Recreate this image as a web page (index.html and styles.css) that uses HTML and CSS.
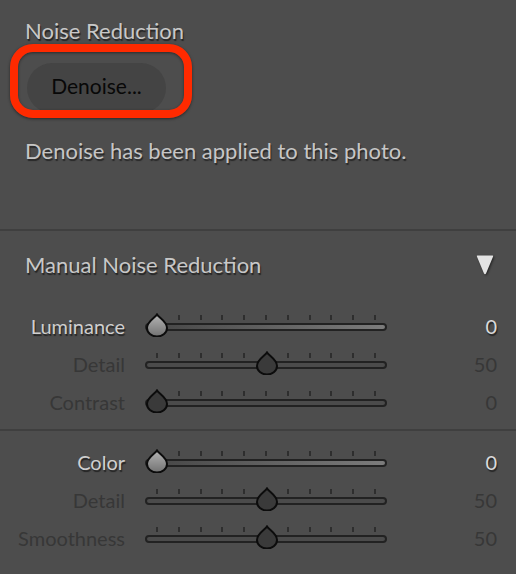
FILE: index.html
```html
<!DOCTYPE html>
<html>
<head>
<meta charset="utf-8">
<link rel="stylesheet" href="styles.css">
</head>
<body>
<svg class="defs" width="0" height="0">
  <defs>
    <linearGradient id="thumbOn" x1="0" y1="0" x2="0" y2="1">
      <stop offset="0" stop-color="#b4b4b4"/>
      <stop offset="1" stop-color="#727272"/>
    </linearGradient>
  </defs>
</svg>
<div class="panel">
  <section class="sec-denoise">
    <div class="title">Noise Reduction</div>
    <div class="btn-wrap">
      <div class="pill">Denoise...</div>
      <div class="highlight"></div>
    </div>
    <div class="desc">Denoise has been applied to this photo.</div>
  </section>

  <div class="manual-head">
    <div class="title">Manual Noise Reduction</div>
    <svg class="tri" width="20" height="24" viewBox="0 0 20 24"><path d="M2.5 2.5 L17.5 2.5 Q18.6 2.6 18 3.8 L11 20.5 Q10 22 9 20.5 L2 3.8 Q1.4 2.6 2.5 2.5 Z" fill="#e4e4e4"/></svg>
  </div>

  <div class="group">
    <div class="row on">
      <div class="label">Luminance</div>
      <div class="slider">
        <div class="ticks"></div>
        <div class="track"></div>
        <svg class="thumb" style="left:0px" width="24" height="24" viewBox="0 0 24 24"><path d="M12 1.5 C13.8 4.8 22 8.5 22 15 A10 8.5 0 0 1 2 15 C2 8.5 10.2 4.8 12 1.5 Z"/></svg>
      </div>
      <div class="value">0</div>
    </div>
    <div class="row off">
      <div class="label">Detail</div>
      <div class="slider">
        <div class="ticks"></div>
        <div class="track"></div>
        <svg class="thumb" style="left:110px" width="24" height="24" viewBox="0 0 24 24"><path d="M12 1.5 C13.8 4.8 22 8.5 22 15 A10 8.5 0 0 1 2 15 C2 8.5 10.2 4.8 12 1.5 Z"/></svg>
      </div>
      <div class="value">50</div>
    </div>
    <div class="row off">
      <div class="label">Contrast</div>
      <div class="slider">
        <div class="ticks"></div>
        <div class="track"></div>
        <svg class="thumb" style="left:0px" width="24" height="24" viewBox="0 0 24 24"><path d="M12 1.5 C13.8 4.8 22 8.5 22 15 A10 8.5 0 0 1 2 15 C2 8.5 10.2 4.8 12 1.5 Z"/></svg>
      </div>
      <div class="value">0</div>
    </div>
  </div>

  <div class="group second">
    <div class="row on">
      <div class="label">Color</div>
      <div class="slider">
        <div class="ticks"></div>
        <div class="track"></div>
        <svg class="thumb" style="left:0px" width="24" height="24" viewBox="0 0 24 24"><path d="M12 1.5 C13.8 4.8 22 8.5 22 15 A10 8.5 0 0 1 2 15 C2 8.5 10.2 4.8 12 1.5 Z"/></svg>
      </div>
      <div class="value">0</div>
    </div>
    <div class="row off">
      <div class="label">Detail</div>
      <div class="slider">
        <div class="ticks"></div>
        <div class="track"></div>
        <svg class="thumb" style="left:110px" width="24" height="24" viewBox="0 0 24 24"><path d="M12 1.5 C13.8 4.8 22 8.5 22 15 A10 8.5 0 0 1 2 15 C2 8.5 10.2 4.8 12 1.5 Z"/></svg>
      </div>
      <div class="value">50</div>
    </div>
    <div class="row off">
      <div class="label">Smoothness</div>
      <div class="slider">
        <div class="ticks"></div>
        <div class="track"></div>
        <svg class="thumb" style="left:110px" width="24" height="24" viewBox="0 0 24 24"><path d="M12 1.5 C13.8 4.8 22 8.5 22 15 A10 8.5 0 0 1 2 15 C2 8.5 10.2 4.8 12 1.5 Z"/></svg>
      </div>
      <div class="value">50</div>
    </div>
  </div>
</div>
</body>
</html>
```

FILE: styles.css
```css
html, body {
  margin: 0;
  padding: 0;
  background: #4d4d4d;
}
body {
  width: 516px;
  height: 574px;
  overflow: hidden;
  font-family: Lato, "Open Sans", sans-serif;
}
.defs {
  position: absolute;
  width: 0;
  height: 0;
}
.panel {
  width: 516px;
}
.title {
  font-size: 22px;
  line-height: 26px;
  color: #c8c8c8;
  text-shadow: 1px 1.5px 1px rgba(0,0,0,0.55);
}
.sec-denoise {
  box-sizing: border-box;
  height: 231px;
  padding: 18px 25px 0 25px;
  border-bottom: 2px solid #3f3f3f;
}
.btn-wrap {
  position: relative;
  margin-top: 19px;
  margin-left: 2px;
  width: 139px;
  height: 50px;
}
.pill {
  box-sizing: border-box;
  width: 139px;
  height: 50px;
  border-radius: 25px;
  background: #444444;
  color: #080808;
  font-size: 21px;
  line-height: 46px;
  padding-bottom: 4px;
  text-align: center;
}
.highlight {
  position: absolute;
  left: -17px;
  top: -19px;
  width: 182px;
  height: 74px;
  box-sizing: border-box;
  border: 8px solid #ff2a00;
  border-radius: 23px;
  box-shadow: 0 1px 3px rgba(0,0,0,0.5), inset 0 1px 3px rgba(0,0,0,0.45);
}
.desc {
  margin-top: 25px;
  font-size: 22px;
  line-height: 26px;
  color: #c6c6c6;
  text-shadow: 1px 1.5px 1px rgba(0,0,0,0.5);
}
.manual-head {
  display: flex;
  align-items: center;
  justify-content: space-between;
  padding: 21px 21px 30px 25px;
}
.tri {
  display: block;
  filter: drop-shadow(1px 1.5px 1px rgba(0,0,0,0.55));
}
.group {
  padding-bottom: 7px;
  border-bottom: 2px solid #3f3f3f;
}
.group.second {
  padding-top: 13px;
  border-bottom: none;
}
.row {
  display: flex;
  align-items: center;
  height: 38px;
}
.label {
  width: 125px;
  text-align: right;
  font-size: 20px;
  line-height: 24px;
  margin-bottom: 3px;
}
.value {
  flex: 1;
  text-align: right;
  padding-right: 19px;
  font-size: 20px;
  line-height: 24px;
  margin-bottom: 3px;
}
.row.on .label, .row.on .value {
  color: #cfcfcf;
  text-shadow: 1px 1.5px 1px rgba(0,0,0,0.55);
}
.row.on .value {
  color: #dadada;
}
.row.off .label, .row.off .value {
  color: #373737;
}
.slider {
  position: relative;
  margin-left: 20px;
  width: 242px;
  height: 38px;
  display: flex;
  flex-direction: column;
}
.ticks {
  margin-top: 7px;
  margin-left: 11px;
  width: 223px;
  height: 5px;
  background: repeating-linear-gradient(to right, #2e2e2e 0 2px, transparent 2px 21.8px);
}
.track {
  margin-top: 3px;
  box-sizing: border-box;
  height: 8px;
  border: 2px solid #222;
  border-radius: 4px;
  background: #4b4b4b;
}
.row.on .track {
  background: linear-gradient(to right, #454545, #7c7c7c);
}
.thumb {
  position: absolute;
  top: 5px;
  display: block;
}
.thumb path {
  stroke: #0c0c0c;
  stroke-width: 2;
  fill: #3a3a3a;
}
.row.on .thumb path {
  fill: url(#thumbOn);
}
```
